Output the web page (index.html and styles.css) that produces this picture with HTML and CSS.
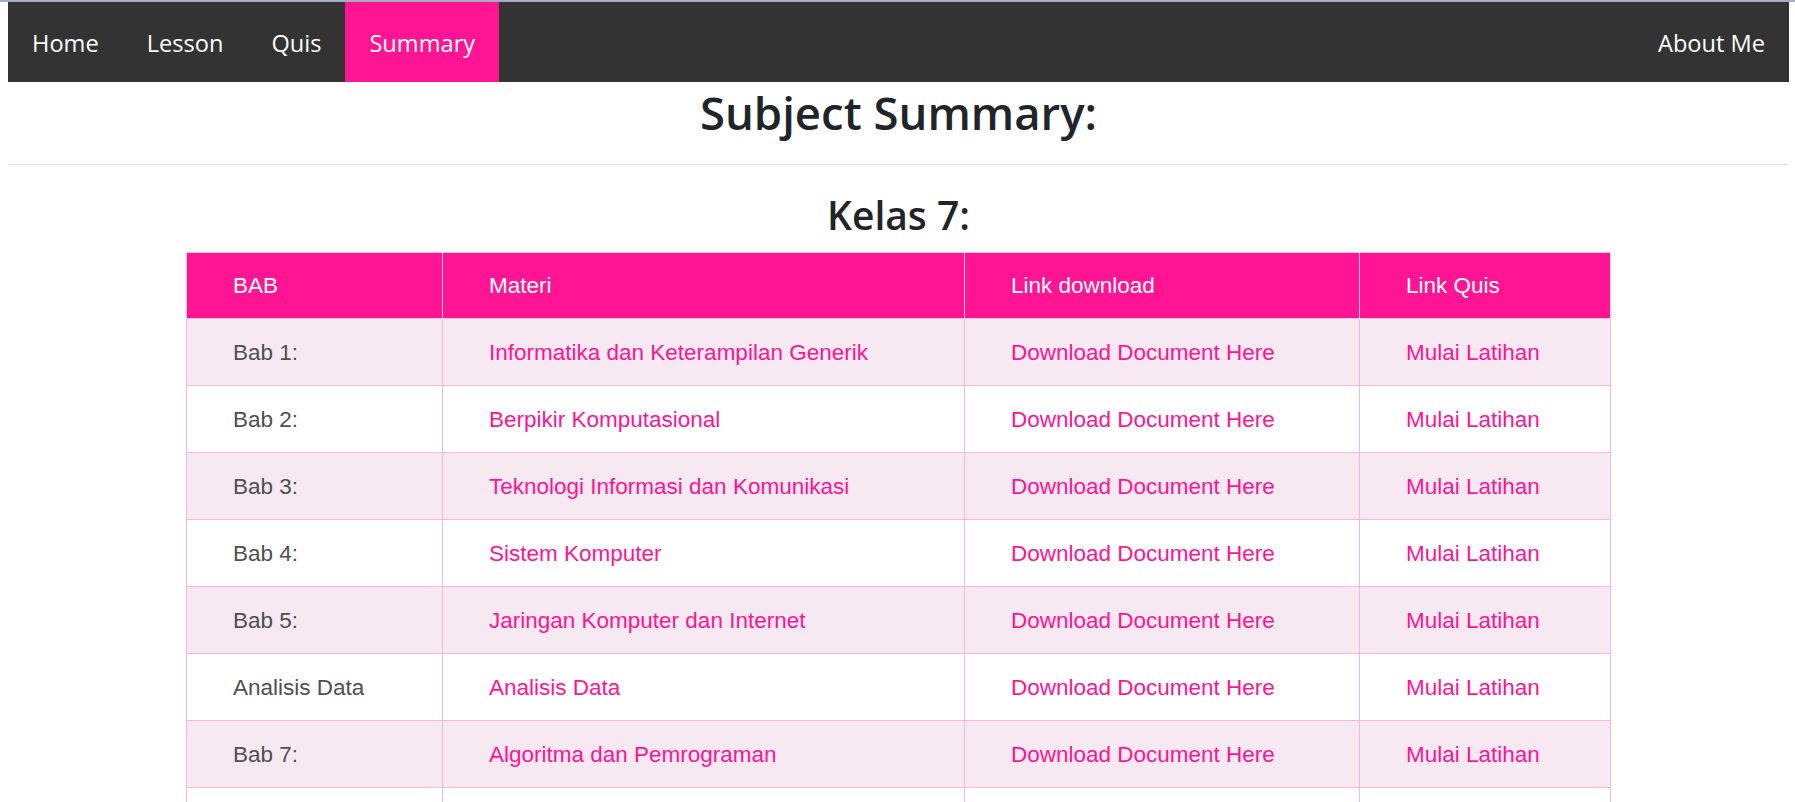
FILE: index.html
```html
<!DOCTYPE html>
<html lang="id">
<head>
<meta charset="utf-8">
<title>Subject Summary</title>
<link rel="stylesheet" href="styles.css">
</head>
<body>
<div class="topstrip"></div>
<div class="wrap">
  <nav class="navbar">
    <ul class="nav-left">
      <li><a class="nav-link" href="#">Home</a></li>
      <li><a class="nav-link" href="#">Lesson</a></li>
      <li><a class="nav-link" href="#">Quis</a></li>
      <li><a class="nav-link active" href="#">Summary</a></li>
    </ul>
    <ul class="nav-right">
      <li><a class="nav-link" href="#">About Me</a></li>
    </ul>
  </nav>
  <h1 class="page-title">Subject Summary:</h1>
  <div class="divider"></div>
  <h2 class="class-title">Kelas 7:</h2>
  <table class="summary">
    <colgroup>
      <col class="c1"><col class="c2"><col class="c3"><col class="c4">
    </colgroup>
    <thead>
      <tr><th>BAB</th><th>Materi</th><th>Link download</th><th>Link Quis</th></tr>
    </thead>
    <tbody>
      <tr><td>Bab 1:</td><td><a href="#">Informatika dan Keterampilan Generik</a></td><td><a href="#">Download Document Here</a></td><td><a href="#">Mulai Latihan</a></td></tr>
      <tr><td>Bab 2:</td><td><a href="#">Berpikir Komputasional</a></td><td><a href="#">Download Document Here</a></td><td><a href="#">Mulai Latihan</a></td></tr>
      <tr><td>Bab 3:</td><td><a href="#">Teknologi Informasi dan Komunikasi</a></td><td><a href="#">Download Document Here</a></td><td><a href="#">Mulai Latihan</a></td></tr>
      <tr><td>Bab 4:</td><td><a href="#">Sistem Komputer</a></td><td><a href="#">Download Document Here</a></td><td><a href="#">Mulai Latihan</a></td></tr>
      <tr><td>Bab 5:</td><td><a href="#">Jaringan Komputer dan Internet</a></td><td><a href="#">Download Document Here</a></td><td><a href="#">Mulai Latihan</a></td></tr>
      <tr><td>Analisis Data</td><td><a href="#">Analisis Data</a></td><td><a href="#">Download Document Here</a></td><td><a href="#">Mulai Latihan</a></td></tr>
      <tr><td>Bab 7:</td><td><a href="#">Algoritma dan Pemrograman</a></td><td><a href="#">Download Document Here</a></td><td><a href="#">Mulai Latihan</a></td></tr>
      <tr><td>Bab 8:</td><td><a href="#">Dampak Sosial Informatika</a></td><td><a href="#">Download Document Here</a></td><td><a href="#">Mulai Latihan</a></td></tr>
    </tbody>
  </table>
</div>
</body>
</html>
```
FILE: styles.css
```css
html, body {
  margin: 0;
  padding: 0;
  background: #ffffff;
}
body {
  font-family: "Open Sans", "Noto Sans", sans-serif;
  color: #212529;
}
.topstrip {
  height: 2px;
  background: #a3aec6;
}
.wrap {
  padding: 0 6px 40px 8px;
}
.navbar {
  display: flex;
  justify-content: space-between;
  align-items: stretch;
  height: 80px;
  background: #333333;
}
.nav-left, .nav-right {
  display: flex;
  list-style: none;
  margin: 0;
  padding: 0;
}
.nav-left li, .nav-right li {
  display: flex;
}
.nav-link {
  display: flex;
  align-items: center;
  padding: 2px 24px 0;
  color: #ffffff;
  text-decoration: none;
  font-size: 23.6px;
}
.nav-link.active {
  background: #ff1493;
}
.page-title {
  margin: 3px 0 0;
  font-size: 45.5px;
  line-height: 55px;
  font-weight: 600;
  text-align: center;
}
.divider {
  margin-top: 24px;
  border-top: 1px solid #e3e3e3;
}
.class-title {
  margin: 26px 0 14px;
  font-size: 39px;
  line-height: 47px;
  font-weight: 600;
  text-align: center;
}
.summary {
  width: 1424px;
  margin: 0 auto;
  border-collapse: collapse;
  table-layout: fixed;
  font-family: "Liberation Sans", Arial, sans-serif;
  font-size: 22.5px;
}
.c1 { width: 256px; }
.c2 { width: 522px; }
.c3 { width: 395px; }
.c4 { width: 251px; }
.summary th, .summary td {
  border: 1px solid #f7b7dc;
  padding: 1px 0 0 46px;
  text-align: left;
  vertical-align: middle;
  white-space: nowrap;
}
.summary th {
  height: 64px;
  background: #ff1493;
  color: #ffffff;
  font-weight: normal;
  border-color: #fbc6e4;
}
.summary td {
  height: 65px;
  color: #4f4f4f;
}
.summary tbody tr:nth-child(odd) td {
  background: #f6e9f2;
}
.summary a {
  color: #ff1493;
  text-decoration: none;
}
```
